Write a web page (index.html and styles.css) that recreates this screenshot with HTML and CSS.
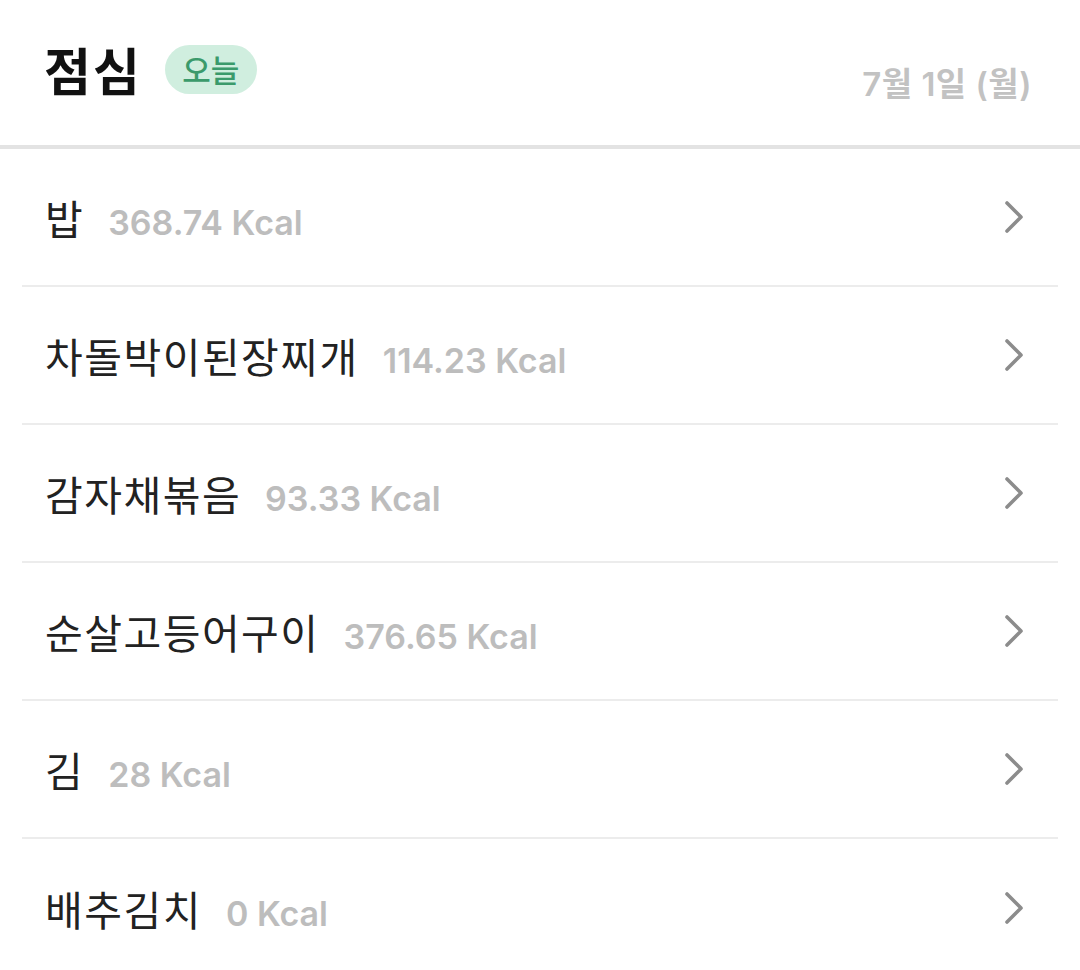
FILE: index.html
```html
<!DOCTYPE html>
<html lang="ko">
<head>
<meta charset="utf-8">
<link rel="stylesheet" href="styles.css">
</head>
<body>
<div class="page">
  <header class="meal-header">
    <div class="meal-title-group">
      <h1 class="meal-title">점심</h1>
      <span class="badge-today">오늘</span>
    </div>
    <div class="meal-date">7월 1일 (월)</div>
  </header>
  <ul class="food-list">
    <li class="food-row"><div class="food-info"><span class="food-name">밥</span><span class="food-kcal">368.74 Kcal</span></div><svg class="chevron" viewBox="0 0 20 34" width="20" height="34"><path d="M3 3 L17 17 L3 31" /></svg></li>
    <li class="food-row"><div class="food-info"><span class="food-name">차돌박이된장찌개</span><span class="food-kcal">114.23 Kcal</span></div><svg class="chevron" viewBox="0 0 20 34" width="20" height="34"><path d="M3 3 L17 17 L3 31" /></svg></li>
    <li class="food-row"><div class="food-info"><span class="food-name">감자채볶음</span><span class="food-kcal">93.33 Kcal</span></div><svg class="chevron" viewBox="0 0 20 34" width="20" height="34"><path d="M3 3 L17 17 L3 31" /></svg></li>
    <li class="food-row"><div class="food-info"><span class="food-name">순살고등어구이</span><span class="food-kcal">376.65 Kcal</span></div><svg class="chevron" viewBox="0 0 20 34" width="20" height="34"><path d="M3 3 L17 17 L3 31" /></svg></li>
    <li class="food-row"><div class="food-info"><span class="food-name">김</span><span class="food-kcal">28 Kcal</span></div><svg class="chevron" viewBox="0 0 20 34" width="20" height="34"><path d="M3 3 L17 17 L3 31" /></svg></li>
    <li class="food-row"><div class="food-info"><span class="food-name">배추김치</span><span class="food-kcal">0 Kcal</span></div><svg class="chevron" viewBox="0 0 20 34" width="20" height="34"><path d="M3 3 L17 17 L3 31" /></svg></li>
  </ul>
</div>
</body>
</html>
```

FILE: styles.css
```css
* { box-sizing: border-box; }
html, body {
  margin: 0;
  padding: 0;
  background: #ffffff;
}
body {
  font-family: "Noto Sans CJK KR", "Noto Sans", sans-serif;
  overflow: hidden;
}
.page {
  width: 1080px;
}
.meal-header {
  height: 149px;
  border-bottom: 4px solid #e3e3e3;
  display: flex;
  justify-content: space-between;
  align-items: flex-start;
  padding: 0 48px 0 44px;
}
.meal-title-group {
  display: flex;
  align-items: center;
  gap: 23px;
  padding-top: 41px;
}
.meal-title {
  margin: 0;
  font-size: 51px;
  line-height: 56px;
  font-weight: 700;
  letter-spacing: 2px;
  color: #111111;
}
.badge-today {
  display: inline-flex;
  align-items: center;
  justify-content: center;
  width: 92px;
  height: 49px;
  border-radius: 25px;
  background: #d0eedf;
  color: #3b9a6b;
  font-size: 31px;
  font-weight: 500;
  padding-bottom: 2px;
}
.meal-date {
  padding-top: 64px;
  font-family: "Inter", "Noto Sans CJK KR", sans-serif;
  font-size: 33px;
  line-height: 40px;
  font-weight: 600;
  letter-spacing: 0.5px;
  color: #c2c2c2;
}
.food-list {
  list-style: none;
  margin: 0 22px;
  padding: 0;
}
.food-row {
  height: 138px;
  border-bottom: 2px solid #ececec;
  display: flex;
  align-items: center;
  justify-content: space-between;
  padding: 0 34px 0 23px;
}
.food-row:last-child {
  border-bottom: none;
}
.food-info {
  display: flex;
  align-items: baseline;
  gap: 24px;
}
.food-name {
  font-size: 41px;
  letter-spacing: 1.5px;
  color: #222222;
  font-weight: 400;
}
.food-kcal {
  font-family: "Inter", sans-serif;
  font-size: 34px;
  font-weight: 600;
  color: #bdbdbd;
}
.chevron {
  fill: none;
  stroke: #8c8c8c;
  stroke-width: 3.6;
  stroke-linecap: round;
  stroke-linejoin: round;
}
```
